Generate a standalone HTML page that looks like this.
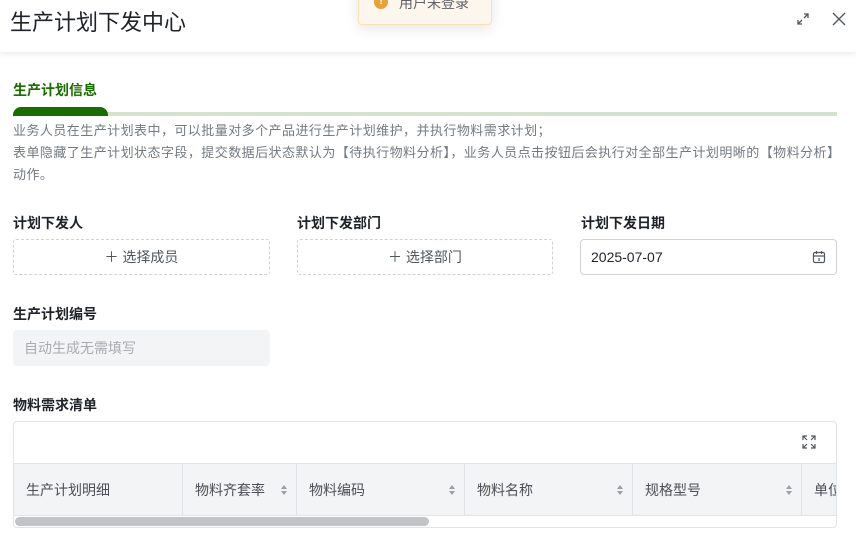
<!DOCTYPE html>
<html><head><meta charset="utf-8"><style>
*{box-sizing:border-box;margin:0;padding:0}
body{width:856px;height:556px;overflow:hidden;background:#fff;font-family:"Liberation Sans","Noto Sans CJK SC",sans-serif;color:#1f2329;position:relative}
.hdr{position:absolute;left:0;top:0;width:856px;height:52px;background:#fff;box-shadow:0 2px 6px rgba(0,0,0,.08)}
.title{position:absolute;left:10px;top:5px;font-size:22px;color:#1f2329}
.toast{position:absolute;left:358px;top:-20px;width:134px;height:45px;background:#fdf6ec;border:1px solid #fae1b5;border-radius:4px;box-shadow:0 4px 14px rgba(0,0,0,.1);font-size:14px;color:#606266;padding:12px 0 0 40px}
.toast i{position:absolute;left:15px;top:14px;width:14px;height:14px;border-radius:50%;background:#e6a23c;color:#fff;font-size:10px;font-style:normal;text-align:center;line-height:14px;font-weight:bold}
.sec{position:absolute;left:13px;top:80px;font-size:14px;font-weight:bold;color:#1a6b00}
.bar{position:absolute;left:13px;top:112px;width:824px;height:4px;background:#d3e3cd}
.bar2{position:absolute;left:13px;top:107px;width:95px;height:9px;background:#1a6b00;border-radius:8px 8px 0 0}
.desc{position:absolute;left:13px;top:120px;font-size:13px;letter-spacing:0.45px;color:#737a80;line-height:22px;width:845px}
.lbl{position:absolute;font-size:14px;font-weight:bold;color:#1f2329}
.btn{position:absolute;height:36px;border:1px dashed #d0d3d6;border-radius:3px;font-size:14px;color:#50565c;text-align:center;line-height:34px}
.inp{position:absolute;height:36px;border:1px solid #d0d3d6;border-radius:4px;font-size:14px;color:#1f2329;line-height:34px;padding-left:10px}
.tbl{position:absolute;left:13px;top:421px;width:824px;height:107px;border:1px solid #e1e3e6;border-radius:4px;overflow:hidden}
.th{position:absolute;top:41px;height:53px;background:#f3f4f6;border-top:1px solid #e1e3e6;border-bottom:1px solid #e1e3e6;border-right:1px solid #e1e3e6;font-size:14px;color:#4a4f55;line-height:52px;padding-left:12px}
.s{position:absolute;right:8px;top:21px;width:7px}
.s:before{content:"";position:absolute;top:0;left:0;border:3.5px solid transparent;border-bottom:4px solid #9aa0a6;border-top:0}
.s:after{content:"";position:absolute;top:6px;left:0;border:3.5px solid transparent;border-top:4px solid #9aa0a6;border-bottom:0}
</style></head><body>
<div class="hdr"><div class="title">生产计划下发中心</div>
<svg style="position:absolute;left:796px;top:12px" width="14" height="14" viewBox="0 0 14 14" fill="none" stroke="#50565c" stroke-width="1.3"><path d="M8 2h4v4M12 2L8 6M6 12H2V8M2 12l4-4"/></svg>
<svg style="position:absolute;left:831px;top:11px" width="16" height="16" viewBox="0 0 16 16" stroke="#50565c" stroke-width="1.3"><path d="M2 2l12 12M14 2L2 14"/></svg>
</div>
<div class="toast"><i>!</i>用户未登录</div>
<div class="sec">生产计划信息</div>
<div class="bar"></div><div class="bar2"></div>
<div class="desc">业务人员在生产计划表中，可以批量对多个产品进行生产计划维护，并执行物料需求计划；<br>表单隐藏了生产计划状态字段，提交数据后状态默认为【待执行物料分析】，业务人员点击按钮后会执行对全部生产计划明晰的【物料分析】<br>动作。</div>
<div class="lbl" style="left:13px;top:213px">计划下发人</div>
<div class="lbl" style="left:297px;top:213px">计划下发部门</div>
<div class="lbl" style="left:581px;top:213px">计划下发日期</div>
<div class="btn" style="left:13px;top:239px;width:257px">＋ 选择成员</div>
<div class="btn" style="left:297px;top:239px;width:256px">＋ 选择部门</div>
<div class="inp" style="left:580px;top:239px;width:257px">2025-07-07
<svg style="position:absolute;right:10px;top:10px" width="14" height="14" viewBox="0 0 14 14" fill="none" stroke="#50565c" stroke-width="1.2"><rect x="1.5" y="2.5" width="11" height="10" rx="1.5"/><path d="M1.5 6h11M4.5 1v3M9.5 1v3M7 8v3"/></svg></div>
<div class="lbl" style="left:13px;top:304px">生产计划编号</div>
<div class="inp" style="left:13px;top:330px;width:257px;background:#f3f4f6;border-color:#f3f4f6;color:#a8abb0">自动生成无需填写</div>
<div class="lbl" style="left:13px;top:395px">物料需求清单</div>
<div class="tbl">
<svg style="position:absolute;left:788px;top:13px" width="14" height="14" viewBox="0 0 14 14" fill="none" stroke="#50565c" stroke-width="1.2"><path d="M1 5V1h4M1 1l4 4M13 5V1H9M13 1L9 5M1 9v4h4M1 13l4-4M13 9v4H9M13 13L9 9"/></svg>
<div class="th" style="left:0;width:169px">生产计划明细</div>
<div class="th" style="left:169px;width:114px">物料齐套率<span class="s"></span></div>
<div class="th" style="left:283px;width:168px">物料编码<span class="s"></span></div>
<div class="th" style="left:451px;width:168px">物料名称<span class="s"></span></div>
<div class="th" style="left:619px;width:169px">规格型号<span class="s"></span></div>
<div class="th" style="left:788px;width:60px">单位</div>
<div style="position:absolute;left:1px;top:95px;width:414px;height:9px;background:#c1c3c6;border-radius:5px"></div>
</div>
</body></html>
